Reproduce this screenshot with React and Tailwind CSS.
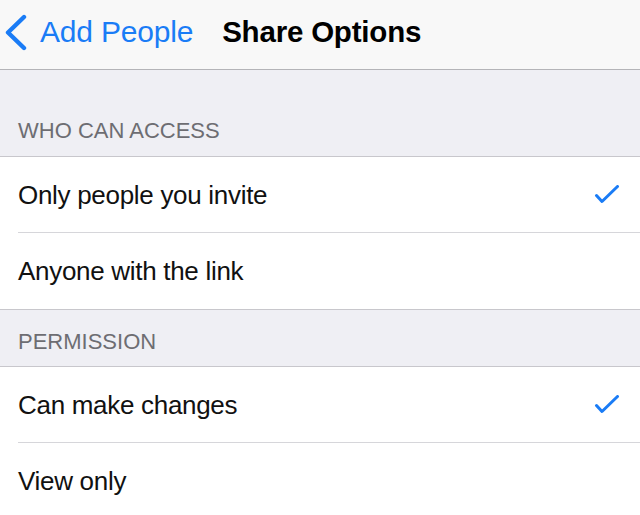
import React from 'react';

const BLUE = '#1a7cf6';

function Check() {
  return (
    <svg width="26" height="20" viewBox="0 0 26 20" fill="none">
      <path d="M2.5 10.5 L8 16.5 L23.5 1.5" stroke={BLUE} strokeWidth="3" strokeLinecap="round" strokeLinejoin="round" />
    </svg>
  );
}

function SectionHeader({ label, className }) {
  return (
    <div className={`flex items-end px-[18px] bg-[#efeff4] border-b border-[#c8c7cc] ${className}`}>
      <span className="text-[22px] leading-[26px] text-[#6d6d72]">{label}</span>
    </div>
  );
}

function Row({ label, checked, last, height }) {
  return (
    <div className={`bg-white pl-[18px] ${last ? 'border-b border-[#c8c7cc]' : ''}`}>
      <div className={`flex items-center justify-between pr-[20px] ${height} ${last ? '' : 'border-b border-[#d6d6da]'}`}>
        <span className="text-[26px] leading-[30px] text-[#111] tracking-[-0.3px]">{label}</span>
        {checked && <Check />}
      </div>
    </div>
  );
}

export default function App() {
  return (
    <div className="w-[640px] h-[515px] overflow-hidden bg-white" style={{ fontFamily: '"Liberation Sans", Arial, sans-serif' }}>
      {/* nav bar */}
      <div className="h-[70px] bg-[#f8f8f8] border-b border-[#b4b4b8] flex items-center pb-[5px]">
        <div className="flex items-center pl-[5px]">
          <svg width="22" height="37" viewBox="0 0 22 37" fill="none">
            <path d="M19 3 L3 18.5 L19 34" stroke={BLUE} strokeWidth="4.4" strokeLinecap="round" strokeLinejoin="round" />
          </svg>
          <span className="ml-[13px] text-[30px] leading-none tracking-[-0.2px]" style={{ color: BLUE }}>Add People</span>
        </div>
        <span className="ml-[29px] text-[29.5px] leading-none font-bold text-black tracking-[-0.2px]">Share Options</span>
      </div>

      <SectionHeader label="WHO CAN ACCESS" className="h-[87px] pb-[12px]" />
      <Row label="Only people you invite" checked height="h-[76px]" />
      <Row label="Anyone with the link" last height="h-[76px]" />

      <SectionHeader label="PERMISSION" className="h-[57px] pb-[11px]" />
      <Row label="Can make changes" checked height="h-[76px]" />
      <Row label="View only" last height="h-[76px]" />
    </div>
  );
}
